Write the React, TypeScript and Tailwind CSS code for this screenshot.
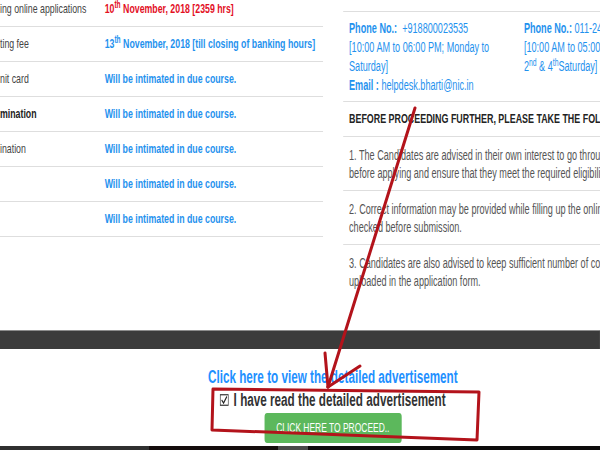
import type { ReactNode } from "react";

type DateRow = { label: string; strong?: boolean; red?: boolean; value: ReactNode };

const dates: DateRow[] = [
  {
    label: "ing online applications",
    red: true,
    value: (
      <>
        10<sup>th</sup> November, 2018 [2359 hrs]
      </>
    ),
  },
  {
    label: "ting fee",
    value: (
      <>
        13<sup>th</sup> November, 2018 [till closing of banking hours]
      </>
    ),
  },
  { label: "nit card", value: "Will be intimated in due course." },
  { label: "mination", strong: true, value: "Will be intimated in due course." },
  { label: "ination", value: "Will be intimated in due course." },
  { label: "", value: "Will be intimated in due course." },
  { label: "", value: "Will be intimated in due course." },
];

const notes: string[][] = [
  [
    "1. The Candidates are advised in their own interest to go through the advertisement carefully",
    "before applying and ensure that they meet the required eligibility criteria.",
  ],
  [
    "2. Correct information may be provided while filling up the online application form as the same will not be",
    "checked before submission.",
  ],
  [
    "3. Candidates are also advised to keep sufficient number of copies of the same photograph as",
    "uploaded in the application form.",
  ],
];

function DatesTable() {
  return (
    <div className="-mt-[8px] w-[497px] shrink-0 text-[13.5px]">
      {dates.map((row, i) => (
        <div key={i} className="flex h-[35px] items-center border-b border-[#dedede]">
          <div className={`w-[161px] shrink-0 ${row.strong ? "font-bold text-[#222]" : "text-[#444]"}`}>
            {row.label}
          </div>
          <div className={`font-bold ${row.red ? "text-[#e3101f]" : "text-[#1f92ee]"}`}>{row.value}</div>
        </div>
      ))}
    </div>
  );
}

function Instructions() {
  return (
    <div className="ml-[31px] mt-[11px] w-[700px] shrink-0 border-t border-[#dedede] text-[14px]">
      <div className="grid grid-cols-[269px_1fr] border-b border-[#dedede] pb-[6px] pl-[9px] pt-[7px] leading-[19px] text-[#1f92ee]">
        <div>
          <div className="whitespace-nowrap">
            <span className="font-bold">Phone No.:</span>&nbsp; +918800023535
          </div>
          <div>[10:00 AM to 06:00 PM; Monday to Saturday]</div>
          <div className="whitespace-nowrap">
            <span className="font-bold">Email :</span> helpdesk.bharti@nic.in
          </div>
        </div>
        <div className="whitespace-nowrap">
          <div>
            <span className="font-bold">Phone No.:</span> 011-24364726
          </div>
          <div>[10:00 AM to 05:00 PM; Monday to Saturday except</div>
          <div>
            2<sup>nd</sup> &amp; 4<sup>th</sup>Saturday]
          </div>
        </div>
      </div>
      <div className="whitespace-nowrap border-b border-[#dedede] py-[10px] pl-[9px] text-[13.7px] font-bold leading-[14px] text-[#222]">
        BEFORE PROCEEDING FURTHER, PLEASE TAKE THE FOLLOWING STEPS
      </div>
      {notes.map((lines, i) => (
        <div
          key={i}
          className={`pb-[8px] pl-[9px] pt-[9px] leading-[18px] text-[#555] ${i < notes.length - 1 ? "border-b border-[#dedede]" : ""}`}
        >
          {lines.map((l) => (
            <div key={l} className="whitespace-nowrap">
              {l}
            </div>
          ))}
        </div>
      ))}
    </div>
  );
}

function Proceed() {
  return (
    <div className="flex flex-col items-center pl-[101px] pt-[18px]">
      <a className="text-[18px] font-bold leading-[20px] text-[#1e90ff]">Click here to view the detailed advertisement</a>
      <label className="mt-[3px] flex items-center gap-[7px] text-[18px] font-bold leading-[20px] text-[#333]">
        <svg width="14" height="12" viewBox="0 0 14 12">
          <rect x="0.75" y="0.75" width="12.5" height="10.5" fill="white" stroke="#333" strokeWidth="1.2" />
          <path d="M3 6 L6 9 L11 2.5" fill="none" stroke="#222" strokeWidth="1.6" />
        </svg>
        I have read the detailed advertisement
      </label>
      <button className="mt-[3px] h-[30px] w-[211px] rounded-[4px] bg-[#5cb85c] text-[13px] text-white">
        CLICK HERE TO PROCEED..
      </button>
    </div>
  );
}

export default function App() {
  return (
    <div className="relative flex h-[450px] w-[600px] flex-col overflow-hidden bg-white font-['Liberation_Sans',Arial,sans-serif]">
      <div className="h-[446px] w-[923px] shrink-0 origin-top-left scale-x-[0.65]">
        <div className="flex h-[330px] overflow-hidden">
          <DatesTable />
          <Instructions />
        </div>
        <div className="h-[19px] border-t border-[#8c8c8c] bg-[#3b3b3b]" />
        <Proceed />
      </div>
      <div className="flex h-[4px]">
        <div className="w-[149px] bg-[#303030]" />
        <div className="w-[129px] bg-[#150d0d]" />
        <div className="w-[30px] bg-[#4a4a4a]" />
        <div className="flex-1 bg-[#0d0b0b]" />
      </div>
      <svg className="pointer-events-none absolute inset-0" width="600" height="450" viewBox="0 0 600 450">
        <g fill="none" stroke="#b3131b" strokeWidth="3" strokeLinecap="round" strokeLinejoin="round">
          <line x1="415" y1="108" x2="328" y2="387" />
          <line x1="325" y1="353" x2="328" y2="387" />
          <line x1="360" y1="366" x2="328" y2="387" />
          <polygon points="213,389 479,392 477,440 212,430" />
        </g>
      </svg>
    </div>
  );
}
